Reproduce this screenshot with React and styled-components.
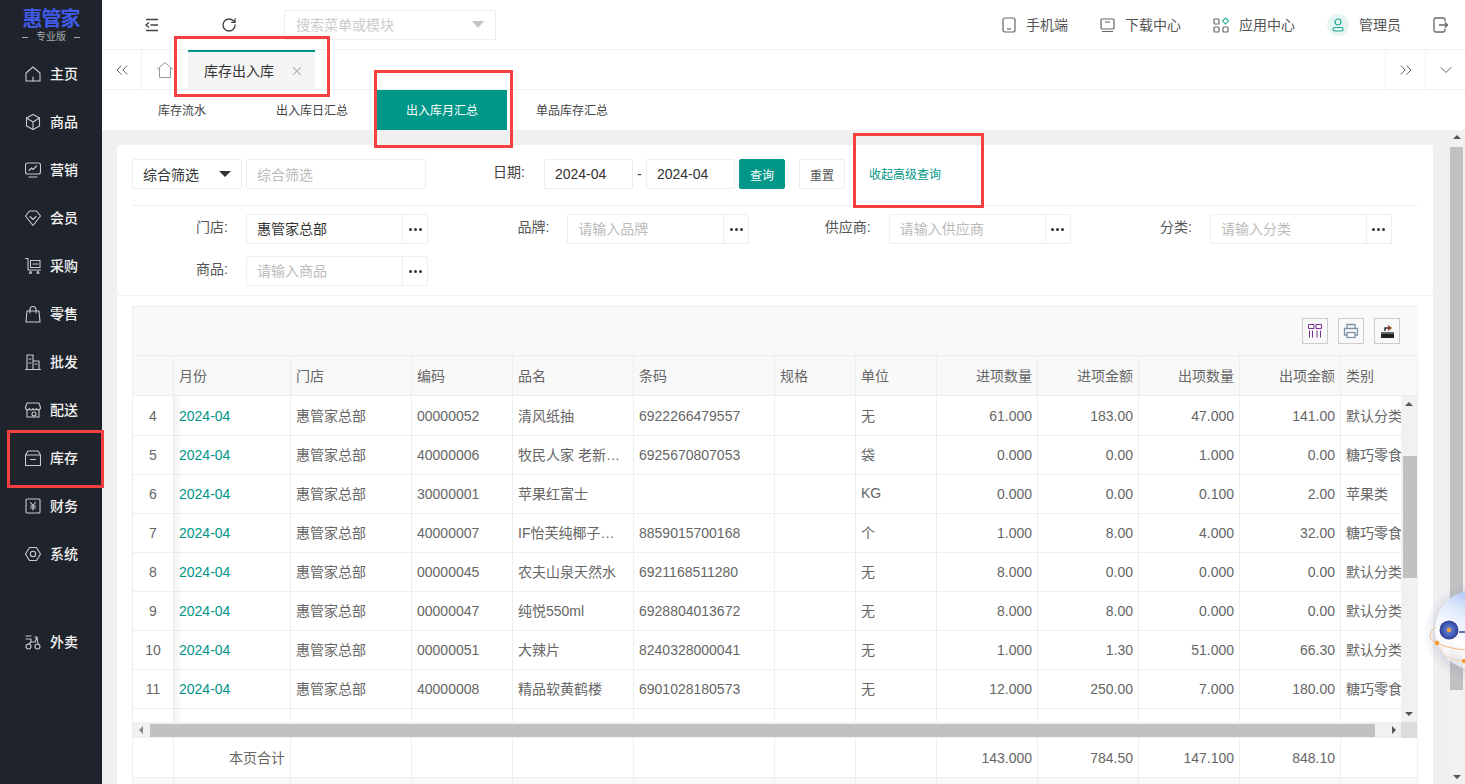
import React from "react"
import styled, { createGlobalStyle } from "styled-components"
import { ChevronDown, ChevronsLeft, ChevronsRight, RotateCw, X } from "lucide-react"

const teal = "#009688"
const line = "#eeeeee"
const columns = "41px 117px 121px 101px 121px 141px 81px 81px 101px 101px 101px 101px 77px"

const Global = createGlobalStyle`
  html, body { margin: 0; height: 100%; overflow: hidden; }
  body {
    font-family: "Liberation Sans", "Noto Sans CJK SC", sans-serif;
    font-size: 14px;
    color: #666;
    background: #f0f0f0;
  }
  * { box-sizing: border-box; }
`

const Page = styled.div`
  position: relative;
  display: flex;
  width: 1465px;
  height: 784px;
  overflow: hidden;
`
/* the CJK fallback sits a pixel low next to icons */
const Raised = styled.span`
  display: inline-block;
  padding-bottom: 2px;
`

const Side = styled.nav`
  flex: 0 0 102px;
  background: #1f232b;
  color: #fff;
`
const Logo = styled.div`
  height: 50px;
  padding-top: 8px;
  text-align: center;
`
const LogoName = styled.div`
  color: #3f5be8;
  font-size: 20px;
  line-height: 22px;
  font-weight: 700;
  letter-spacing: -1px;
`
const LogoSub = styled.div`
  display: flex;
  justify-content: center;
  align-items: center;
  gap: 8px;
  color: #a8abb0;
  font-size: 10px;
  line-height: 14px;
  &::before, &::after {
    content: "";
    width: 6px;
    height: 1px;
    background: #a8abb0;
  }
`
const NavItem = styled.a`
  display: flex;
  align-items: center;
  height: 48px;
  padding-left: 25px;
  gap: 9px;
  color: #f2f2f2;
  font-weight: 500;
  margin-top: ${p => p.$gap || 0}px;
`

const Main = styled.div`
  flex: 1;
  min-width: 0;
  display: flex;
  flex-direction: column;
`
const Header = styled.header`
  display: flex;
  align-items: center;
  flex: 0 0 50px;
  background: #fff;
  border-bottom: 1px solid #f3f3f3;
  padding: 0 17px 0 41px;
`
const HeaderTool = styled.span`
  display: flex;
  margin-right: ${p => p.$after}px;
  color: #444;
`
const Search = styled.div`
  display: flex;
  align-items: center;
  justify-content: space-between;
  width: 212px;
  height: 30px;
  padding: 0 11px;
  border: 1px solid ${line};
  color: #ccc;
  &::after {
    content: "";
    border: 6px solid transparent;
    border-top: 7px solid #c4c4c4;
    border-bottom: 0;
  }
`
const HeaderRight = styled.div`
  display: flex;
  align-items: center;
  margin-left: auto;
  gap: 32px;
`
const HeaderItem = styled.span`
  display: flex;
  align-items: center;
  gap: 10px;
  color: #555;
`
const Avatar = styled.span`
  display: flex;
  align-items: center;
  justify-content: center;
  width: 22px;
  height: 22px;
  border-radius: 50%;
  background: #e6f5f2;
`

const TabBar = styled.div`
  display: flex;
  flex: 0 0 41px;
  background: #fff;
  border-bottom: 2px solid #f0f0f0;
`
const TabTool = styled.span`
  display: flex;
  align-items: center;
  justify-content: center;
  width: ${p => p.$w}px;
  color: #666;
  border-left: ${p => (p.$edge ? "1px solid #f3f3f3" : "0")};
  border-right: ${p => (p.$right ? "1px solid #f3f3f3" : "0")};
  margin-left: ${p => (p.$push ? "auto" : "0")};
`
const HomeTab = styled.span`
  display: flex;
  align-items: center;
  justify-content: center;
  width: 46px;
`
const OpenTab = styled.div`
  display: flex;
  align-items: center;
  justify-content: space-between;
  width: 127px;
  padding: 0 11px 0 16px;
  background: #f5f5f5;
  border-top: 2px solid ${teal};
  color: #333;
`
const SubBar = styled.div`
  display: flex;
  flex: 0 0 40px;
  margin-top: -1px;
  padding-left: 15px;
  background: #fff;
`
const SubTab = styled.a`
  display: flex;
  align-items: center;
  justify-content: center;
  width: 130px;
  font-size: 12px;
  color: ${p => (p.$active ? "#fff" : "#444")};
  background: ${p => (p.$active ? teal : "transparent")};
`

const Body = styled.div`
  flex: 1;
  min-height: 0;
  display: flex;
`
const Scroller = styled.div`
  flex: 1;
  min-width: 0;
  padding: 15px 17px 0 15px;
  overflow: hidden;
`
const PageBar = styled.div`
  position: relative;
  flex: 0 0 15px;
  background: #f1f1f1;
`
const PageThumb = styled.div`
  width: 13px;
  margin: 17px 0 0 0;
  height: 543px;
  background: #c1c1c1;
`
const Arrow = styled.i`
  position: absolute;
  width: 0;
  height: 0;
  border: 4px solid transparent;
  ${p => p.$dir === "up" && "border-bottom: 4px solid #555; border-top: 0;"}
  ${p => p.$dir === "down" && "border-top: 4px solid #555; border-bottom: 0;"}
  ${p => p.$dir === "left" && "border-right: 4px solid #888; border-left: 0;"}
  ${p => p.$dir === "right" && "border-left: 4px solid #555; border-right: 0;"}
  ${p => p.$pos}
`

const Card = styled.section`
  background: #fff;
  min-height: 700px;
`
const FilterRow = styled.div`
  display: flex;
  align-items: center;
  margin: 0 15px;
  padding: 14px 0 16px;
  border-bottom: 1px solid ${line};
`
const Box = styled.div`
  display: flex;
  align-items: center;
  flex: 0 0 auto;
  width: ${p => p.$w}px;
  height: 30px;
  padding: 0 10px;
  border: 1px solid ${line};
  border-radius: 2px;
  margin-left: ${p => p.$ml || 0}px;
  color: ${p => (p.$hint ? "#bbb" : "#333")};
  justify-content: ${p => (p.$caret ? "space-between" : "flex-start")};
`
const Caret = styled.i`
  border: 6px solid transparent;
  border-top: 6px solid #333;
  border-bottom: 0;
`
const Label = styled.span`
  color: #444;
  margin-left: ${p => p.$ml || 0}px;
  padding-bottom: 6px;
`
const Dash = styled.span`
  width: 13px;
  text-align: center;
  color: #444;
`
const Btn = styled.button`
  width: 46px;
  height: 30px;
  padding: 0;
  font: inherit;
  font-size: 12px;
  border-radius: 2px;
  margin-left: ${p => p.$ml}px;
  color: ${p => (p.$primary ? "#fff" : "#555")};
  background: ${p => (p.$primary ? teal : "#fff")};
  border: 1px solid ${p => (p.$primary ? teal : line)};
`
const TextLink = styled.a`
  margin-left: 24px;
  padding-bottom: 2px;
  font-size: 12px;
  color: ${teal};
`
const Advanced = styled.div`
  display: grid;
  grid-template-columns: repeat(4, 321.33px);
  row-gap: 12px;
  padding: 8px 15px 9px;
  border-bottom: 1px solid #f3f3f3;
`
const Field = styled.div`
  display: grid;
  grid-template-columns: 96px 182px;
  column-gap: 18px;
  align-items: center;
`
const FieldLabel = styled.span`
  text-align: right;
  color: #555;
  padding-bottom: 6px;
`
const Picker = styled.div`
  display: flex;
  height: 30px;
  border: 1px solid ${line};
  border-radius: 2px;
`
const PickerText = styled.span`
  flex: 1;
  display: flex;
  align-items: center;
  padding: 0 0 2px 10px;
  color: ${p => (p.$hint ? "#bbb" : "#333")};
`
const PickerDots = styled.span`
  display: flex;
  align-items: center;
  justify-content: center;
  gap: 2px;
  width: 25px;
  border-left: 1px solid ${line};
  & i {
    width: 3px;
    height: 3px;
    border-radius: 50%;
    background: #333;
  }
`

const Table = styled.div`
  margin: 10px 15px 0;
  width: 1286px;
  border-top: 1px solid ${line};
  border-left: 1px solid ${line};
`
const Toolbar = styled.div`
  display: flex;
  justify-content: flex-end;
  align-items: center;
  gap: 10px;
  height: 49px;
  padding-right: 18px;
  background: #f9f9f9;
  border-bottom: 1px solid ${line};
`
const ToolBtn = styled.span`
  display: flex;
  align-items: center;
  justify-content: center;
  width: 26px;
  height: 26px;
  border: 1px solid #ccc;
`
const Row = styled.div`
  display: grid;
  grid-template-columns: ${columns};
  height: ${p => p.$h}px;
  background: ${p => p.$bg || "#fff"};
  border-bottom: 1px solid ${line};
  white-space: nowrap;
`
const Cell = styled.div`
  display: flex;
  align-items: center;
  justify-content: ${p => (p.$end ? "flex-end" : p.$mid ? "center" : "flex-start")};
  padding: 0 5px ${p => (p.$cjk ? 2 : 0)}px;
  border-right: 1px solid ${line};
  overflow: hidden;
  color: ${p => (p.$link ? teal : "#666")};
`
const BodyWrap = styled.div`
  display: flex;
  height: 326px;
`
const Rows = styled.div`
  position: relative;
  flex: 0 0 1268px;
  overflow: hidden;
`
const FixedShadow = styled.div`
  position: absolute;
  left: 41px;
  top: 0;
  bottom: 0;
  width: 8px;
  background: linear-gradient(to right, rgba(0, 0, 0, 0.05), rgba(0, 0, 0, 0));
`
const VBar = styled.div`
  position: relative;
  flex: 0 0 17px;
  background: #f1f1f1;
`
const VThumb = styled.div`
  margin: 60px 0 0 2px;
  width: 14px;
  height: 122px;
  background: #c1c1c1;
`
const HBar = styled.div`
  position: relative;
  display: flex;
  align-items: center;
  height: 16px;
  background: #f1f1f1;
`
const HThumb = styled.div`
  margin-left: 17px;
  width: 1225px;
  height: 13px;
  background: #c1c1c1;
`
const Corner = styled.div`
  position: absolute;
  right: 1px;
  top: 0;
  width: 16px;
  height: 16px;
  background: #dcdcdc;
`

const Mark = styled.div`
  position: absolute;
  left: ${p => p.$x}px;
  top: ${p => p.$y}px;
  width: ${p => p.$w}px;
  height: ${p => p.$h}px;
  border: 3px solid #f44040;
  pointer-events: none;
`
const Robot = styled.svg`
  position: absolute;
  left: 1425px;
  top: 585px;
  overflow: visible;
`

const NavIcon = ({ children }) => (
  <svg width="16" height="18" viewBox="0 0 16 18" fill="none" stroke="#c9cbce" strokeWidth="1.1" strokeLinejoin="round" strokeLinecap="round">
    {children}
  </svg>
)

const navs = [
  ["主页", <><path d="M1 8 8 2l7 6v8H1z" /><path d="M8 12v4" /></>],
  ["商品", <><path d="M8 1.5 14.5 5v8L8 16.5 1.5 13V5z" /><path d="M1.5 5 8 9l6.5-4M8 9v7.5" /></>],
  ["营销", <><rect x="0.5" y="2" width="15" height="11" rx="2" /><path d="M4 9.5 6.5 7 8 8.5 11.5 5M4 16h8" /></>],
  ["会员", <><path d="M4.5 2h7L15.5 7 8 16.5.5 7z" /><path d="M5 7.5 8 10.5l3-3" /></>],
  ["采购", <><path d="M.5 1.5H3V13M3 13h12.5" /><rect x="5.5" y="3.5" width="9.5" height="7" /><path d="M8 7h5" /><circle cx="5.5" cy="15.5" r="1" /><circle cx="13" cy="15.5" r="1" /></>],
  ["零售", <><path d="M2 6h12l1 11H1z" /><path d="M5 8V4.500a3 3 0 0 1 6 0V8" /></>],
  ["批发", <><path d="M2 16V2h6v14M8 8h6v8M0.5 16.5h15" /><path d="M4 6h2M4 10h2M10 11h2" /></>],
  ["配送", <><path d="M2 2h12l1.500 4.500c0 3-3.500 3-4 1-.5 2-3 2-3.500 0-.5 2-3 2-3.500 0-.5 2-4 2-4-1z" /><path d="M2 9v7h12V9" /><circle cx="9" cy="13" r="2" /></>],
  ["库存", <><path d="M3 2h10l2.500 4v10.500H.5V6z" /><path d="M.5 6h15M5.500 10.500h5" /></>],
  ["财务", <><rect x="1" y="2" width="14" height="14" rx="1" /><path d="M5.500 5.500 8 8.500l2.500-3M5.500 9h5M5.500 11h5M8 8.500V13" /></>],
  ["系统", <><path d="M4.500 2.500h7L15.500 9l-4 6.500h-7L.5 9z" /><circle cx="8" cy="9" r="2.700" /></>],
]

const rows = [
  ["4", "00000052", "清风纸抽", "6922266479557", "无", "61.000", "183.00", "47.000", "141.00", "默认分类"],
  ["5", "40000006", "牧民人家 老新…", "6925670807053", "袋", "0.000", "0.00", "1.000", "0.00", "糖巧零食"],
  ["6", "30000001", "苹果红富士", "", "KG", "0.000", "0.00", "0.100", "2.00", "苹果类"],
  ["7", "40000007", "IF怡芙纯椰子…", "8859015700168", "个", "1.000", "8.00", "4.000", "32.00", "糖巧零食"],
  ["8", "00000045", "农夫山泉天然水", "6921168511280", "无", "8.000", "0.00", "0.000", "0.00", "默认分类"],
  ["9", "00000047", "纯悦550ml", "6928804013672", "无", "8.000", "8.00", "0.000", "0.00", "默认分类"],
  ["10", "00000051", "大辣片", "8240328000041", "无", "1.000", "1.30", "51.000", "66.30", "默认分类"],
  ["11", "40000008", "精品软黄鹤楼", "6901028180573", "无", "12.000", "250.00", "7.000", "180.00", "糖巧零食"],
]

const heads = ["", "月份", "门店", "编码", "品名", "条码", "规格", "单位", "进项数量", "进项金额", "出项数量", "出项金额", "类别"]

const PickerField = ({ label, value, hint }) => (
  <Field>
    <FieldLabel>{label}</FieldLabel>
    <Picker>
      <PickerText $hint={hint}>{value}</PickerText>
      <PickerDots><i /><i /><i /></PickerDots>
    </Picker>
  </Field>
)

export default function App() {
  return (
    <Page>
      <Global />
      <Side>
        <Logo>
          <LogoName>惠管家</LogoName>
          <LogoSub>专业版</LogoSub>
        </Logo>
        {navs.map(([name, icon]) => (
          <NavItem key={name}>
            <NavIcon>{icon}</NavIcon>
            <Raised>{name}</Raised>
          </NavItem>
        ))}
        <NavItem $gap={40}>
          <NavIcon>
            <circle cx="3.500" cy="13.500" r="2.500" />
            <circle cx="12.500" cy="13.500" r="2.500" />
            <path d="M1 3h5M1 6h5v3l-2 2M6 9h4l2-5h-2M12 4l1 7" />
          </NavIcon>
          <Raised>外卖</Raised>
        </NavItem>
      </Side>

      <Main>
        <Header>
          <HeaderTool $after={60}>
            <svg width="18" height="18" viewBox="0 0 18 18" fill="none" stroke="#444" strokeWidth="1.4">
              <path d="M3 3.500h12M7.500 9H15M3 14.500h12M6 6.500 3 9l3 2.500" />
            </svg>
          </HeaderTool>
          <HeaderTool $after={47}><RotateCw size={16} strokeWidth={2} /></HeaderTool>
          <Search><Raised>搜索菜单或模块</Raised></Search>
          <HeaderRight>
            <HeaderItem>
              <svg width="14" height="16" viewBox="0 0 14 16" fill="none" stroke="#666" strokeWidth="1.200">
                <rect x="1" y="1" width="12" height="14" rx="2" />
                <path d="M5 12h4" />
              </svg>
              <Raised>手机端</Raised>
            </HeaderItem>
            <HeaderItem>
              <svg width="15" height="16" viewBox="0 0 15 16" fill="none" stroke="#666" strokeWidth="1.200">
                <rect x="1" y="2" width="13" height="10" rx="1" />
                <path d="M2 14.500h11M5 5h5" />
              </svg>
              <Raised>下载中心</Raised>
            </HeaderItem>
            <HeaderItem>
              <svg width="16" height="16" viewBox="0 0 16 16" fill="none" stroke="#666" strokeWidth="1.200">
                <rect x="1" y="2" width="5" height="5" rx="1" />
                <rect x="1" y="10" width="5" height="5" rx="1" />
                <rect x="10" y="10" width="5" height="5" rx="1" />
                <path d="m12.500 1 3 3-3 3-3-3z" stroke="#33b5a0" />
              </svg>
              <Raised>应用中心</Raised>
            </HeaderItem>
            <HeaderItem>
              <Avatar>
                <svg width="12" height="14" viewBox="0 0 12 14" fill="none" stroke="#1da892" strokeWidth="1.200">
                  <circle cx="6" cy="4" r="3" />
                  <rect x="1" y="9.500" width="10" height="3.500" rx="1.700" />
                </svg>
              </Avatar>
              <Raised>管理员</Raised>
            </HeaderItem>
            <svg width="15" height="16" viewBox="0 0 15 16" fill="none" stroke="#666" strokeWidth="1.300">
              <path d="M12 4.500V2.500a1.500 1.500 0 0 0-1.500-1.500H2.500A1.500 1.500 0 0 0 1 2.500v11A1.500 1.500 0 0 0 2.500 15h8a1.500 1.500 0 0 0 1.500-1.500v-2" />
              <path d="M6 8h8.500M12 5.500 14.500 8 12 10.500" />
            </svg>
          </HeaderRight>
        </Header>

        <TabBar>
          <TabTool $w={40} $right><ChevronsLeft size={20} strokeWidth={1.2} /></TabTool>
          <HomeTab>
            <svg width="18" height="18" viewBox="0 0 18 18" fill="none" stroke="#999" strokeWidth="1">
              <path d="M1 8.500 9 1.500l8 7M3.500 7v9.500h11V7" />
            </svg>
          </HomeTab>
          <OpenTab>
            <Raised>库存出入库</Raised>
            <X size={14} color="#bbb" />
          </OpenTab>
          <TabTool $w={40} $edge $push><ChevronsRight size={20} strokeWidth={1.2} /></TabTool>
          <TabTool $w={40} $edge><ChevronDown size={20} strokeWidth={1.2} /></TabTool>
        </TabBar>

        <SubBar>
          <SubTab><Raised>库存流水</Raised></SubTab>
          <SubTab><Raised>出入库日汇总</Raised></SubTab>
          <SubTab $active><Raised>出入库月汇总</Raised></SubTab>
          <SubTab><Raised>单品库存汇总</Raised></SubTab>
        </SubBar>

        <Body>
          <Scroller>
            <Card>
              <FilterRow>
                <Box $w={110} $caret>综合筛选<Caret /></Box>
                <Box $w={180} $ml={4} $hint>综合筛选</Box>
                <Label $ml={67}>日期:</Label>
                <Box $w={89} $ml={19}>2024-04</Box>
                <Dash>-</Dash>
                <Box $w={89}>2024-04</Box>
                <Btn $primary $ml={4}>查询</Btn>
                <Btn $ml={14}>重置</Btn>
                <TextLink>收起高级查询</TextLink>
              </FilterRow>

              <Advanced>
                <PickerField label="门店:" value="惠管家总部" />
                <PickerField label="品牌:" value="请输入品牌" hint />
                <PickerField label="供应商:" value="请输入供应商" hint />
                <PickerField label="分类:" value="请输入分类" hint />
                <PickerField label="商品:" value="请输入商品" hint />
              </Advanced>

              <Table>
                <Toolbar>
                  <ToolBtn>
                    <svg width="14" height="14" viewBox="0 0 14 14" fill="none" stroke="#7a2f8e" strokeWidth="1">
                      <path d="M.5.500h5.500v4H.5zM8 .5h5.500v4H8zM1.500 6.500V13.500M4.500 6.500V13.500M9 6.500V13.500M12.500 6.500V13.500" />
                    </svg>
                  </ToolBtn>
                  <ToolBtn>
                    <svg width="16" height="16" viewBox="0 0 16 16" fill="none" stroke="#7d93a8" strokeWidth="1.300">
                      <path d="M4 5V1.500h8V5M4 12H1.500V5.500h13V12H12" />
                      <rect x="4" y="9.500" width="8" height="5" />
                    </svg>
                  </ToolBtn>
                  <ToolBtn>
                    <svg width="15" height="15" viewBox="0 0 15 15">
                      <path d="M1 8h13v6H1z" fill="#222" />
                      <path d="M1 8h13v2H1z" fill="#666" />
                      <path d="M5 7V4h3" fill="none" stroke="#333" strokeWidth="1.500" />
                      <path d="m8 1 4 3-4 3z" fill="#8a4a20" />
                    </svg>
                  </ToolBtn>
                </Toolbar>

                <Row $h={40} $bg="#f9f9f9">
                  {heads.map((h, i) => (
                    <Cell key={i} $cjk $end={i >= 8 && i <= 11}>{h}</Cell>
                  ))}
                </Row>

                <BodyWrap>
                  <Rows>
                    {rows.map(r => (
                      <Row key={r[0]} $h={r[0] === "4" ? 40 : 39}>
                        <Cell $mid>{r[0]}</Cell>
                        <Cell $link>2024-04</Cell>
                        <Cell $cjk>惠管家总部</Cell>
                        <Cell>{r[1]}</Cell>
                        <Cell $cjk>{r[2]}</Cell>
                        <Cell>{r[3]}</Cell>
                        <Cell />
                        <Cell $cjk>{r[4]}</Cell>
                        <Cell $end>{r[5]}</Cell>
                        <Cell $end>{r[6]}</Cell>
                        <Cell $end>{r[7]}</Cell>
                        <Cell $end>{r[8]}</Cell>
                        <Cell $cjk>{r[9]}</Cell>
                      </Row>
                    ))}
                    <Row $h={39}>
                      {heads.map((h, i) => <Cell key={i} />)}
                    </Row>
                    <FixedShadow />
                  </Rows>
                  <VBar>
                    <Arrow $dir="up" $pos="left: 4px; top: 6px;" />
                    <VThumb />
                    <Arrow $dir="down" $pos="left: 4px; bottom: 6px;" />
                  </VBar>
                </BodyWrap>

                <HBar>
                  <Arrow $dir="left" $pos="left: 6px; top: 4px;" />
                  <HThumb />
                  <Arrow $dir="right" $pos="right: 22px; top: 4px;" />
                  <Corner />
                </HBar>

                <Row $h={40}>
                  <Cell />
                  <Cell $end $cjk>本页合计</Cell>
                  <Cell /><Cell /><Cell /><Cell /><Cell /><Cell />
                  <Cell $end>143.000</Cell>
                  <Cell $end>784.50</Cell>
                  <Cell $end>147.100</Cell>
                  <Cell $end>848.10</Cell>
                  <Cell />
                </Row>
                <Row $h={40} $bg="#f9f9f9">
                  {heads.map((h, i) => <Cell key={i} />)}
                </Row>
              </Table>
            </Card>
          </Scroller>
          <PageBar>
            <Arrow $dir="up" $pos="left: 3px; top: 5px;" />
            <PageThumb />
            <Arrow $dir="down" $pos="left: 3px; bottom: 5px;" />
          </PageBar>
        </Body>
      </Main>

      <Mark $x={174} $y={36} $w={156} $h={61} />
      <Mark $x={374} $y={70} $w={139} $h={78} />
      <Mark $x={853} $y={133} $w={131} $h={75} />
      <Mark $x={7} $y={430} $w={97} $h={58} />

      <Robot width="40" height="90" viewBox="0 0 40 90">
        <defs>
          <linearGradient id="ball" x1="0.7" y1="0" x2="0.2" y2="0.9">
            <stop offset="0" stopColor="#8fb2f4" />
            <stop offset="0.4" stopColor="#dfe9fc" />
            <stop offset="0.75" stopColor="#ffffff" />
            <stop offset="1" stopColor="#ffffff" stopOpacity="0.6" />
          </linearGradient>
          <radialGradient id="eye" cx="0.5" cy="0.5" r="0.5">
            <stop offset="0.3" stopColor="#5a78cc" />
            <stop offset="1" stopColor="#2b3f99" />
          </radialGradient>
          <radialGradient id="glow" cx="0.5" cy="0.5" r="0.5">
            <stop offset="0.75" stopColor="#8a94b8" stopOpacity="0.22" />
            <stop offset="1" stopColor="#8a94b8" stopOpacity="0" />
          </radialGradient>
        </defs>
        <circle cx="48" cy="47" r="50" fill="url(#glow)" />
        <circle cx="50" cy="45" r="40" fill="url(#ball)" />
        <path d="M15 40l4 2M34 47h8" stroke="#33439a" strokeWidth="1.500" />
        <circle cx="24" cy="45" r="10.500" fill="#ffffff" />
        <circle cx="24" cy="45" r="9.500" fill="url(#eye)" />
        <circle cx="24" cy="45" r="2.200" fill="#f0a040" />
        <path d="M11 42c-8 6-8 12 1 16 8 4 18 6 28 7" fill="none" stroke="#f5b67c" strokeWidth="1" />
        <circle cx="12" cy="58" r="2.300" fill="#f59a30" />
        <path d="M16 62c-1 6 6 13 24 14" fill="none" stroke="#f3d0ac" strokeWidth="1" />
        <circle cx="39" cy="76" r="2.200" fill="#f59a30" />
      </Robot>
    </Page>
  )
}
